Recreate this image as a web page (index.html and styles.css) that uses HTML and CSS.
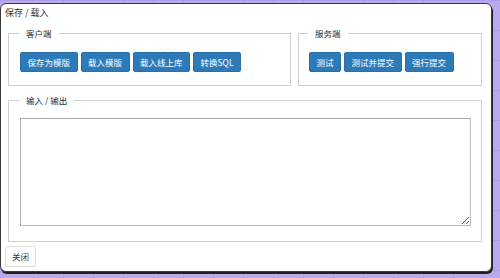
FILE: index.html
```html
<!DOCTYPE html>
<html lang="zh">
<head>
<meta charset="utf-8">
<title>保存 / 载入</title>
<link rel="stylesheet" href="styles.css">
</head>
<body>
<div class="dialog">
  <div class="title">保存 / 载入</div>
  <div class="top-row">
    <fieldset class="group client">
      <legend>客户端</legend>
      <div class="btns">
        <button class="btn">保存为模版</button>
        <button class="btn">载入模版</button>
        <button class="btn">载入线上库</button>
        <button class="btn">转换SQL</button>
      </div>
    </fieldset>
    <fieldset class="group server">
      <legend>服务端</legend>
      <div class="btns">
        <button class="btn">测试</button>
        <button class="btn">测试并提交</button>
        <button class="btn">强行提交</button>
      </div>
    </fieldset>
  </div>
  <fieldset class="group io">
    <legend>输入 / 输出</legend>
    <textarea class="io-text"></textarea>
  </fieldset>
  <div class="footer">
    <button class="close">关闭</button>
  </div>
</div>
</body>
</html>
```

FILE: styles.css
```css
html, body {
  margin: 0;
  padding: 0;
}
body {
  width: 500px;
  height: 278px;
  overflow: hidden;
  background-color: #b9aaee;
  background-image:
    linear-gradient(to right, rgba(140, 120, 210, 0.25) 1px, transparent 1px),
    linear-gradient(to bottom, rgba(140, 120, 210, 0.25) 1px, transparent 1px);
  background-size: 30px 30px;
  background-position: 3px 0;
  font-family: "Noto Sans CJK SC", "Noto Sans", sans-serif;
  color: #333;
}
.dialog {
  box-sizing: border-box;
  width: 492px;
  height: 269px;
  margin: 3px 0 0 0;
  background: #fff;
  border: 1px solid #3a3a3a;
  border-radius: 6px;
  box-shadow: 1px 2px 0 #1e1e1e;
  display: flex;
  flex-direction: column;
}
.title {
  font-size: 9px;
  line-height: 14px;
  padding: 2px 4px 0;
  color: #333;
}
.top-row {
  display: flex;
  gap: 7px;
  margin: 6px 9px 0 7px;
}
.group {
  margin: 0;
  border: 1px solid #cfcfcf;
  padding: 12px 10px 13px 11px;
  min-width: 0;
}
.group legend {
  font-size: 8.5px;
  line-height: 14px;
  padding: 0 7px;
  margin-left: -1px;
  color: #2e2e2e;
}
.client {
  width: 283px;
  box-sizing: border-box;
}
.server {
  flex: 1;
  padding-left: 10px;
}
.btns {
  display: flex;
  gap: 3px;
}
.btn {
  font-family: "Noto Sans CJK SC", "Noto Sans", sans-serif;
  font-size: 8.5px;
  height: 20px;
  padding: 0 6.5px;
  border: 1px solid #2a6fa8;
  border-radius: 2px;
  background: #2d7ab9;
  color: #fff;
  line-height: 18px;
}
.io {
  margin: 7px 9px 0 7px;
  padding: 11px 11px 15px 11px;
}
.io-text {
  display: block;
  box-sizing: border-box;
  width: 451px;
  height: 108px;
  margin: 0;
  border: 1px solid #bdbdbd;
  border-top-color: #a9a9a9;
  border-left-color: #b0b0b0;
  resize: both;
  background: #fff;
}
.footer {
  display: flex;
  padding: 4px 4px 0;
}
.close {
  font-family: "Noto Sans CJK SC", "Noto Sans", sans-serif;
  font-size: 8.5px;
  height: 21px;
  padding: 0 6px;
  line-height: 19px;
  border: 1px solid #dcdcdc;
  border-radius: 2px;
  background: #fff;
  color: #333;
}
```
